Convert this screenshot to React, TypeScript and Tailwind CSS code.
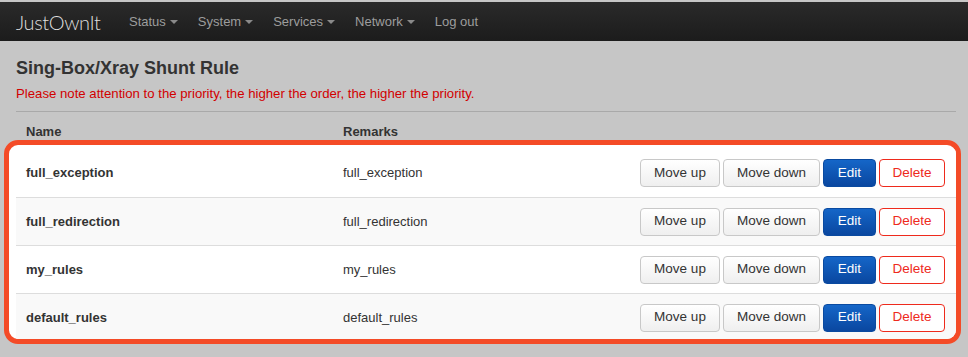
import React from 'react';

const RULES = [
  { name: 'full_exception', remarks: 'full_exception' },
  { name: 'full_redirection', remarks: 'full_redirection' },
  { name: 'my_rules', remarks: 'my_rules' },
  { name: 'default_rules', remarks: 'default_rules' },
];

const MENU = [
  { label: 'Status', dropdown: true },
  { label: 'System', dropdown: true },
  { label: 'Services', dropdown: true },
  { label: 'Network', dropdown: true },
  { label: 'Log out', dropdown: false },
];

function Caret() {
  return (
    <span className="ml-[4px] inline-block h-0 w-0 border-x-[4px] border-t-[4px] border-x-transparent border-t-[#8a8a8a] align-middle" />
  );
}

export default function App() {
  return (
    <div className="h-[357px] w-[968px] overflow-hidden bg-[#c6c6c6] pt-[2px] font-['Liberation_Sans',Arial,sans-serif] text-[#333]">
      {/* Navbar */}
      <div className="flex h-[39px] items-center bg-gradient-to-b from-[#2a2a2a] to-[#1c1c1c] pl-4">
        <span className="w-[85px] mr-[28px] font-['Lato',sans-serif] text-[20px] font-light tracking-[-0.4px] text-[#dedede]">
          JustOwnIt
        </span>
        <div className="flex items-center gap-[20px] text-[13px] text-[#9d9d9d]">
          {MENU.map((m) => (
            <span key={m.label} className="flex items-center">
              {m.label}
              {m.dropdown && <Caret />}
            </span>
          ))}
        </div>
      </div>

      {/* Content */}
      <div className="pl-4 pr-[12px] pt-[17px]">
        <h2 className="text-[18px] font-bold leading-[20px] text-[#333]">Sing-Box/Xray Shunt Rule</h2>
        <p className="mt-[7px] text-[13.2px] leading-[18px] text-[#d20000]">
          Please note attention to the priority, the higher the order, the higher the priority.
        </p>

        <div className="mt-[8px] flex h-[29px] border-t border-[#a9a9a9] pt-[12px] text-[13px] font-bold leading-[16px]">
          <div className="w-[327px] pl-[10px]">Name</div>
          <div>Remarks</div>
        </div>
      </div>

      {/* Highlighted rows */}
      <div className="ml-[4px] mr-[7px] h-[204px] overflow-hidden rounded-[14px] border-[5px] border-[#f44b27] bg-white pl-[7px] pt-[4px]">
        {RULES.map((r, i) => (
          <div
            key={r.name}
            className={`flex h-[48px] shrink-0 items-center text-[13px] ${i > 0 ? 'border-t border-[#dddddd]' : ''} ${
              i % 2 === 1 ? 'bg-[#f9f9f9]' : 'bg-white'
            }`}
          >
            <div className="w-[327px] pl-[10px] font-bold">{r.name}</div>
            <div className="flex-1">{r.remarks}</div>
            <div className="mr-[11px] flex gap-[3px] text-[13.5px]">
              <button className="h-[28px] w-[80px] rounded-[4px] border border-[#c8c8c8] bg-gradient-to-b from-white to-[#efefef] text-[#333]">
                Move up
              </button>
              <button className="h-[28px] w-[97px] rounded-[4px] border border-[#c8c8c8] bg-gradient-to-b from-white to-[#efefef] text-[#333]">
                Move down
              </button>
              <button className="h-[28px] w-[53px] rounded-[4px] border border-[#0a4aa0] bg-gradient-to-b from-[#1566c8] to-[#0a47a0] text-white">
                Edit
              </button>
              <button className="h-[28px] w-[66px] rounded-[4px] border border-[#ee2a1c] bg-white text-[#ee2a1c]">
                Delete
              </button>
            </div>
          </div>
        ))}
      </div>
    </div>
  );
}
